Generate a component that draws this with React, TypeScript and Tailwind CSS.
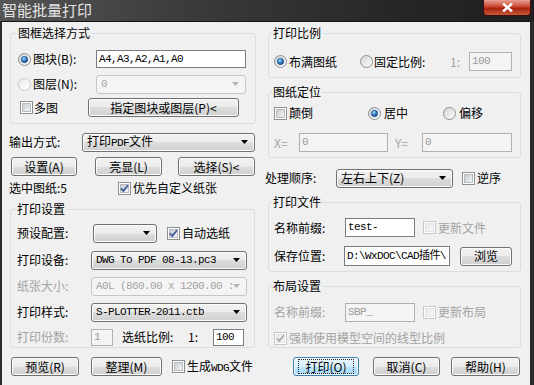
import { useId } from "react";

const mono = "font-['Liberation_Mono','Noto_Sans_CJK_SC',monospace] text-[11px] tracking-[-0.6px]";
const dis = "text-[#a3a3a3]";

function useSvgId() {
  return useId().replace(/[^a-zA-Z0-9]/g, "");
}

function Radio({ checked = false, disabled = false }: { checked?: boolean; disabled?: boolean }) {
  const id = useSvgId();
  return (
    <svg width="13" height="13" viewBox="0 0 13 13" className="shrink-0">
      <defs>
        <linearGradient id={id + "b"} x1="0" y1="0" x2="1" y2="1">
          <stop offset="0" stopColor={disabled ? "#ececec" : "#cfd2d6"} />
          <stop offset="1" stopColor="#ffffff" />
        </linearGradient>
        <radialGradient id={id + "d"} cx="0.4" cy="0.35" r="0.7">
          <stop offset="0" stopColor="#b5e6ff" />
          <stop offset="0.45" stopColor="#3a86d0" />
          <stop offset="1" stopColor="#123f73" />
        </radialGradient>
      </defs>
      <circle cx="6.5" cy="6.5" r="6" fill={`url(#${id}b)`} stroke={disabled ? "#c8c8c8" : "#8e8f8f"} />
      {checked && <circle cx="6.5" cy="6.5" r="3.2" fill={`url(#${id}d)`} stroke="#24507f" strokeWidth="0.6" />}
    </svg>
  );
}

function Check({ checked = false, disabled = false }: { checked?: boolean; disabled?: boolean }) {
  const id = useSvgId();
  return (
    <svg width="13" height="13" viewBox="0 0 13 13" className="shrink-0">
      <defs>
        <linearGradient id={id + "c"} x1="0" y1="0" x2="1" y2="1">
          <stop offset="0" stopColor={disabled ? "#e6e6e6" : "#c6cace"} />
          <stop offset="1" stopColor={disabled ? "#fafafa" : "#f4f5f6"} />
        </linearGradient>
      </defs>
      <rect x="0.5" y="0.5" width="12" height="12" fill="#fff" stroke={disabled ? "#c8c8c8" : "#8e8f8f"} />
      <rect x="2.5" y="2.5" width="8" height="8" fill={`url(#${id}c)`} stroke={disabled ? "#e2e2e2" : "#b7bbc0"} />
      {checked && (
        <path d="M3 6.3 L5.4 8.9 L10 3.3" fill="none" stroke={disabled ? "#a9a9a9" : "#3d5b97"} strokeWidth="1.7" />
      )}
    </svg>
  );
}

function Arrow({ disabled = false }: { disabled?: boolean }) {
  return (
    <svg width="7" height="4" viewBox="0 0 7 4" className="shrink-0">
      <polygon points="0,0 7,0 3.5,4" fill={disabled ? "#b4b4b4" : "#000"} />
    </svg>
  );
}

function Btn({ children, className = "", focus = false }: { children: React.ReactNode; className?: string; focus?: boolean }) {
  return (
    <div
      className={`h-[19px] shrink-0 flex items-center justify-center rounded-[3px] border shadow-[inset_0_0_0_1px_#fcfcfc] ${
        focus
          ? "border-[#3c7fb1] bg-[linear-gradient(#eaf6fd,#d9f0fc_50%,#bee6fd_50%,#a7d9f5)]"
          : "border-[#707070] bg-[linear-gradient(#f2f2f2,#ebebeb_50%,#dddddd_50%,#cfcfcf)]"
      } ${className}`}
    >
      {focus ? <span className="outline-1 outline-dotted outline-[#222] px-[6px] leading-[13px]">{children}</span> : children}
    </div>
  );
}

function Combo({ children, className = "", disabled = false, monoText = false }: { children?: React.ReactNode; className?: string; disabled?: boolean; monoText?: boolean }) {
  return (
    <div
      className={`h-[19px] shrink-0 flex items-center justify-between pl-[4px] pr-[6px] rounded-[3px] border ${
        disabled
          ? "border-[#c3c7ca] bg-[#f4f4f4] text-[#a3a3a3]"
          : "border-[#707070] bg-[linear-gradient(#f2f2f2,#ebebeb_50%,#dddddd_50%,#cfcfcf)] shadow-[inset_0_0_0_1px_#fcfcfc]"
      } ${className}`}
    >
      <span className={`overflow-hidden ${monoText ? mono : ""}`}>{children}</span>
      <Arrow disabled={disabled} />
    </div>
  );
}

function Field({ text, className = "", disabled = false }: { text: string; className?: string; disabled?: boolean }) {
  return (
    <div
      className={`shrink-0 flex items-center pl-[2px] overflow-hidden border ${mono} ${
        disabled ? "border-[#adb2b5] bg-[#f4f4f4] text-[#9a9a9a]" : "border-[#7a7d82] bg-white text-black"
      } ${className}`}
    >
      {text}
    </div>
  );
}

function Group({ title, className = "", legend = "ml-[6px]", children }: { title: string; className?: string; legend?: string; children: React.ReactNode }) {
  return (
    <fieldset className={`border border-[#d5dfe5] rounded-[3px] ${className}`}>
      <legend className={`${legend} px-[1px] leading-[14px]`}>{title}</legend>
      {children}
    </fieldset>
  );
}

export default function App() {
  return (
    <div className="w-[534px] h-[385px] bg-[#2a2a2a] flex flex-col overflow-hidden whitespace-nowrap font-['Noto_Sans_CJK_SC',sans-serif] text-[12px] text-black">
      {/* title bar */}
      <div className="h-[21px] flex items-start justify-between bg-[linear-gradient(90deg,#555555,#3b3b3b_35%,#262626_75%,#1f1f1f)]">
        <span className="ml-[2px] text-[15px] leading-[19px] text-[#e4e4e4]">智能批量打印</span>
        <div className="mr-[3px] w-[48px] h-[16px] rounded-b-[4px] border border-t-0 border-[#3d0f0a] bg-[linear-gradient(#e8a193,#c9452f_45%,#a8220e_55%,#c75a3c)] flex items-center justify-center">
          <svg width="11" height="9" viewBox="0 0 11 9">
            <path d="M1 0.5 L10 8.5 M10 0.5 L1 8.5" stroke="#fff" strokeWidth="2.4" />
          </svg>
        </div>
      </div>

      {/* client */}
      <div className="flex-1 ml-[2px] mr-[4px] border-t border-[#141414] bg-[#f0f0f0] flex">
        {/* left column */}
        <div className="ml-[6px] w-[248px] flex flex-col">
          <Group title="图框选择方式" className="ml-[2px] w-[246px] mt-[4px] pb-[6px]" legend="ml-[6px]">
            <div className="flex items-center h-[18px] mt-[10px] pl-[7px]">
              <div className="w-[78px] flex items-center gap-[2px]">
                <Radio checked />
                <span>图块(B):</span>
              </div>
              <Field className="w-[150px] h-[18px]" text="A4,A3,A2,A1,A0" />
            </div>
            <div className="flex items-center h-[20px] mt-[6px] pl-[7px]">
              <div className="w-[78px] flex items-center gap-[2px]">
                <Radio disabled />
                <span>图层(N):</span>
              </div>
              <Combo className="w-[150px]" disabled monoText>0</Combo>
            </div>
            <div className="flex items-center h-[19px] mt-[4px] pl-[9px]">
              <div className="w-[68px] flex items-center gap-[1px]">
                <Check />
                <span>多图</span>
              </div>
              <Btn className="w-[151px]">指定图块或图层(P)&lt;</Btn>
            </div>
          </Group>

          <div className="flex items-center h-[20px] mt-[8px] ml-[1px]">
            <span className="w-[73px]">输出方式:</span>
            <Combo className="w-[173px]">
              打印<span className={mono}>PDF</span>文件
            </Combo>
          </div>

          <div className="flex items-center h-[19px] mt-[5px] ml-[3px]">
            <Btn className="w-[66px]">设置(A)</Btn>
            <Btn className="w-[67px] ml-[18px]">亮显(L)</Btn>
            <Btn className="w-[77px] ml-[16px]">选择(S)&lt;</Btn>
          </div>

          <div className="flex items-center h-[16px] mt-[4px] ml-[1px]">
            <span className="w-[109px]">选中图纸:5</span>
            <Check checked />
            <span className="ml-[2px]">优先自定义纸张</span>
          </div>

          <Group title="打印设置" className="ml-[2px] w-[245px] mt-[6px] pb-[1px]" legend="ml-[5px]">
            <div className="flex items-center h-[20px] mt-[7px] pl-[6px]">
              <span className="w-[76px]">预设配置:</span>
              <Combo className="w-[64px]" />
              <div className="ml-[10px] flex items-center gap-[2px]">
                <Check checked />
                <span>自动选纸</span>
              </div>
            </div>
            <div className="flex items-center h-[20px] mt-[7px] pl-[6px]">
              <span className="w-[74px]">打印设备:</span>
              <Combo className="w-[156px]" monoText>DWG To PDF 08-13.pc3</Combo>
            </div>
            <div className="flex items-center h-[20px] mt-[6px] pl-[6px]">
              <span className={`w-[74px] ${dis}`}>纸张大小:</span>
              <Combo className="w-[156px]" disabled monoText>A0L (860.00 x 1200.00 :</Combo>
            </div>
            <div className="flex items-center h-[20px] mt-[6px] pl-[6px]">
              <span className="w-[74px]">打印样式:</span>
              <Combo className="w-[156px]" monoText>S-PLOTTER-2011.ctb</Combo>
            </div>
            <div className="flex items-center h-[18px] mt-[6px] pl-[6px]">
              <span className={`w-[74px] ${dis}`}>打印份数:</span>
              <Field className="w-[22px] h-[17px]" text="1" disabled />
              <span className="ml-[9px] w-[66px]">选纸比例:</span>
              <span className="w-[25px]">1:</span>
              <Field className="w-[31px] h-[17px]" text="100" />
            </div>
          </Group>

          <div className="flex items-center h-[19px] mt-[9px] ml-[3px]">
            <Btn className="w-[68px]">预览(R)</Btn>
            <Btn className="w-[71px] ml-[12px]">整理(M)</Btn>
            <div className="ml-[10px] flex items-center gap-[2px]">
              <Check />
              <span>
                生成<span className={mono}>WDG</span>文件
              </span>
            </div>
          </div>
        </div>

        {/* right column */}
        <div className="ml-[9px] w-[259px] flex flex-col">
          <Group title="打印比例" className="ml-[3px] w-[253px] mt-[4px] pb-[6px]" legend="ml-[3px]">
            <div className="flex items-center h-[19px] mt-[12px] pl-[5px]">
              <div className="w-[86px] flex items-center gap-[2px]">
                <Radio checked />
                <span>布满图纸</span>
              </div>
              <div className="w-[90px] flex items-center gap-[1px]">
                <Radio />
                <span>固定比例:</span>
              </div>
              <span className={`w-[19px] ${dis}`}>1:</span>
              <Field className="w-[43px] h-[19px]" text="100" disabled />
            </div>
          </Group>

          <Group title="图纸定位" className="ml-[3px] w-[253px] mt-[7px] pb-[5px]" legend="ml-[3px]">
            <div className="flex items-center h-[16px] mt-[6px] pl-[5px]">
              <div className="w-[94px] flex items-center gap-[2px]">
                <Check />
                <span>颠倒</span>
              </div>
              <div className="w-[75px] flex items-center gap-[3px]">
                <Radio checked />
                <span>居中</span>
              </div>
              <div className="flex items-center gap-[3px]">
                <Radio />
                <span>偏移</span>
              </div>
            </div>
            <div className="flex items-center h-[19px] mt-[12px] pl-[5px]">
              <span className={`w-[25px] ${dis}`}>X=</span>
              <Field className="w-[89px] h-[19px]" text="0" disabled />
              <span className={`ml-[7px] w-[27px] ${dis}`}>Y=</span>
              <Field className="w-[90px] h-[19px]" text="0" disabled />
            </div>
          </Group>

          <div className="flex items-center h-[20px] mt-[10px]">
            <span className="w-[71px]">处理顺序:</span>
            <Combo className="w-[117px]">左右上下(Z)</Combo>
            <div className="ml-[9px] flex items-center gap-[2px]">
              <Check />
              <span>逆序</span>
            </div>
          </div>

          <Group title="打印文件" className="ml-[3px] w-[253px] mt-[7px] pb-[5px]" legend="ml-[3px]">
            <div className="flex items-center h-[19px] mt-[9px] pl-[5px]">
              <span className="w-[71px]">名称前缀:</span>
              <Field className="w-[70px] h-[19px]" text="test-" />
              <div className="ml-[8px] flex items-center gap-[2px]">
                <Check disabled />
                <span className={dis}>更新文件</span>
              </div>
            </div>
            <div className="flex items-center h-[20px] mt-[9px] pl-[5px]">
              <span className="w-[70px]">保存位置:</span>
              <Field className="w-[106px] h-[20px]" text="D:\WxDOC\CAD插件\" />
              <Btn className="w-[52px] ml-[10px]">浏览</Btn>
            </div>
          </Group>

          <Group title="布局设置" className="ml-[3px] w-[253px] mt-[7px] pb-[1px]" legend="ml-[3px]">
            <div className="flex items-center h-[20px] mt-[9px] pl-[5px]">
              <span className={`w-[71px] ${dis}`}>名称前缀:</span>
              <Field className="w-[70px] h-[19px]" text="SBP_" disabled />
              <div className="ml-[8px] flex items-center gap-[2px]">
                <Check disabled />
                <span className={dis}>更新布局</span>
              </div>
            </div>
            <div className="flex items-center h-[16px] mt-[8px] pl-[5px] gap-[2px]">
              <Check checked disabled />
              <span className={dis}>强制使用模型空间的线型比例</span>
            </div>
          </Group>

          <div className="flex items-center h-[19px] mt-[9px] ml-[28px]">
            <Btn className="w-[66px]" focus>打印(O)</Btn>
            <Btn className="w-[67px] ml-[14px]">取消(C)</Btn>
            <Btn className="w-[69px] ml-[11px]">帮助(H)</Btn>
          </div>
        </div>
      </div>
    </div>
  );
}
